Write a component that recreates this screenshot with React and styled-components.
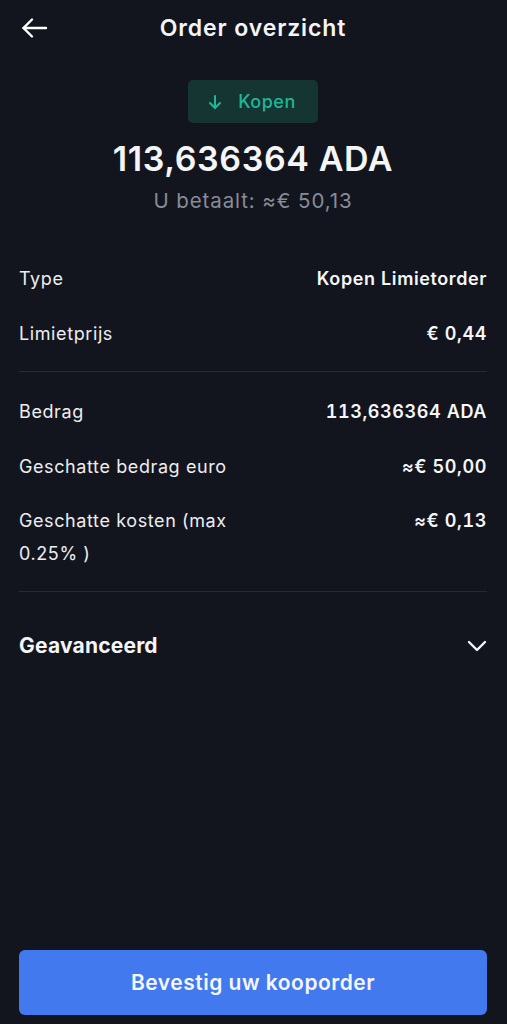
import React from "react";
import styled, { createGlobalStyle } from "styled-components";

const Global = createGlobalStyle`
  html, body { margin: 0; padding: 0; background: #13151e; }
  body { font-family: Inter, "Noto Sans", sans-serif; color: #f4f5f7; }
`;

const Page = styled.div`
  width: 507px;
  height: 1024px;
  box-sizing: border-box;
  display: flex;
  flex-direction: column;
  background: #13151e;
  padding: 0 20px 9px 19px;
`;

const Header = styled.header`
  position: relative;
  height: 56px;
  display: flex;
  align-items: center;
  justify-content: center;
`;

const BackButton = styled.button`
  position: absolute;
  left: 2px;
  top: 15px;
  background: none;
  border: none;
  padding: 0;
  color: #fff;
  display: flex;
`;

const Title = styled.h1`
  margin: 0;
  font-size: 23px;
  font-weight: 600;
  letter-spacing: 0.9px;
`;

const Summary = styled.section`
  display: flex;
  flex-direction: column;
  align-items: center;
  padding-top: 24px;
`;

const Badge = styled.div`
  width: 130px;
  height: 43px;
  box-sizing: border-box;
  border-radius: 5px;
  background: #153532;
  color: #22b597;
  display: flex;
  align-items: center;
  justify-content: center;
  gap: 16px;
  padding-right: 2px;
  font-size: 18px;
  font-weight: 500;
  letter-spacing: 0.5px;
`;

const Amount = styled.div`
  margin-top: 14px;
  font-size: 34px;
  font-weight: 600;
  line-height: 44px;
  letter-spacing: 0.6px;
`;

const Pays = styled.div`
  margin-top: 5px;
  font-size: 20.5px;
  color: #878c97;
  line-height: 30px;
  letter-spacing: 0.9px;
`;

const Group = styled.div`
  display: flex;
  flex-direction: column;
  padding: ${(p) => p.$pad};
  border-bottom: ${(p) => (p.$divider ? "1px solid #262a35" : "none")};
`;

const Row = styled.div`
  display: flex;
  justify-content: space-between;
  align-items: flex-start;
  gap: 16px;
  font-size: 18px;
  line-height: 33px;
  letter-spacing: 0.6px;
  margin-bottom: ${(p) => p.$gap || 0}px;
`;

const Label = styled.span`
  color: #eceef1;
  max-width: ${(p) => p.$max || "none"};
`;

const Value = styled.span`
  font-weight: 600;
  color: #f6f7f9;
  text-align: right;
  white-space: nowrap;
  font-variant-numeric: tabular-nums;
`;

const Advanced = styled.div`
  display: flex;
  justify-content: space-between;
  align-items: center;
  padding-top: 41px;
  font-size: 21px;
  line-height: 26px;
  font-weight: 700;
  letter-spacing: 0.2px;
`;

const Spacer = styled.div`
  flex: 1;
`;

const ConfirmButton = styled.button`
  height: 65px;
  width: 100%;
  border: none;
  border-radius: 6px;
  background: #4279ef;
  color: #f4f6fb;
  font-family: Inter, "Noto Sans", sans-serif;
  font-size: 21px;
  font-weight: 600;
  letter-spacing: 0.5px;
`;

export default function App() {
  return (
    <>
      <Global />
      <Page>
        <Header>
          <BackButton aria-label="Terug">
            <svg width="27" height="26" viewBox="0 0 27 26" fill="none" stroke="currentColor" strokeWidth="2.4" strokeLinecap="round" strokeLinejoin="round">
              <path d="M25 13H2.5" />
              <path d="M11 4.5L2.5 13L11 21.5" />
            </svg>
          </BackButton>
          <Title>Order overzicht</Title>
        </Header>
        <Summary>
          <Badge>
            <svg width="14" height="16" viewBox="0 0 14 16" fill="none" stroke="currentColor" strokeWidth="2" strokeLinecap="round" strokeLinejoin="round">
              <path d="M7 2V14" />
              <path d="M2 9L7 14L12 9" />
            </svg>
            Kopen
          </Badge>
          <Amount>113,636364 ADA</Amount>
          <Pays>U betaalt: ≈€ 50,13</Pays>
        </Summary>
        <Group $pad="46px 0 21px" $divider>
          <Row $gap={22}>
            <Label>Type</Label>
            <Value>Kopen Limietorder</Value>
          </Row>
          <Row>
            <Label>Limietprijs</Label>
            <Value>€ 0,44</Value>
          </Row>
        </Group>
        <Group $pad="23px 0 21px" $divider>
          <Row $gap={22}>
            <Label>Bedrag</Label>
            <Value>113,636364 ADA</Value>
          </Row>
          <Row $gap={21}>
            <Label>Geschatte bedrag euro</Label>
            <Value>≈€ 50,00</Value>
          </Row>
          <Row>
            <Label $max="225px">Geschatte kosten (max 0.25% )</Label>
            <Value>≈€ 0,13</Value>
          </Row>
        </Group>
        <Advanced>
          <span>Geavanceerd</span>
          <svg width="20" height="12" viewBox="0 0 20 12" fill="none" stroke="currentColor" strokeWidth="2.4" strokeLinecap="round" strokeLinejoin="round">
            <path d="M2 2L10 10L18 2" />
          </svg>
        </Advanced>
        <Spacer />
        <ConfirmButton>Bevestig uw kooporder</ConfirmButton>
      </Page>
    </>
  );
}
